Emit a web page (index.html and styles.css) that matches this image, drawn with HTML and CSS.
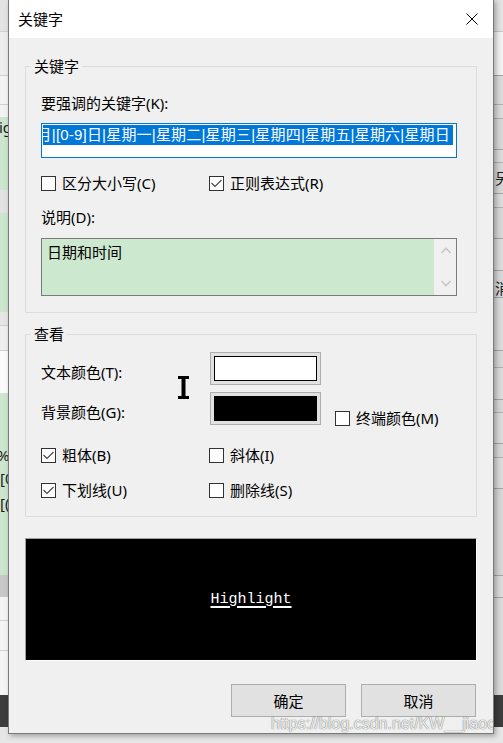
FILE: index.html
```html
<!DOCTYPE html>
<html lang="zh-CN">
<head>
<meta charset="utf-8">
<title>关键字</title>
<link rel="stylesheet" href="styles.css">
</head>
<body>
<div class="desk">
  <div class="bg-left">
    <span class="bl bl-ig">ig</span>
    <span class="bl bl-pct">%</span>
    <span class="bl bl-b0">[0</span>
    <span class="bl bl-b1">[(</span>
  </div>
  <div class="bg-mid"></div>
  <div class="bg-right">
    <span class="br br-1">另</span>
    <span class="br br-2">消</span>
  </div>
</div>

<div class="dialog">
  <div class="titlebar">
    <span class="title">关键字</span>
    <svg class="close" width="12" height="12" viewBox="0 0 12 12"><path d="M0.5 0.5L11.5 11.5M11.5 0.5L0.5 11.5" stroke="#000" stroke-width="1" fill="none"/></svg>
  </div>
  <div class="dlg-body">
    <fieldset class="grp grp-kw">
      <legend>关键字</legend>
      <div class="lbl">要强调的关键字(K):</div>
      <div class="kw-input">
        <div class="sel"><span class="sel-text">[0-9]月|[0-9]日|星期一|星期二|星期三|星期四|星期五|星期六|星期日</span></div>
      </div>
      <div class="chk-grid chk-row1">
        <label class="chk"><span class="box"></span><span>区分大小写(C)</span></label>
        <label class="chk"><span class="box"><svg width="13" height="13" viewBox="0 0 13 13"><polyline points="1.5,6 5,9.5 11.5,3" fill="none" stroke="#444" stroke-width="1.1"/></svg></span><span>正则表达式(R)</span></label>
      </div>
      <div class="lbl desc-label">说明(D):</div>
      <div class="desc">
        <div class="desc-text">日期和时间</div>
        <div class="scroll">
          <svg width="10" height="7" viewBox="0 0 10 7"><polyline points="0.5,6 5,1.2 9.5,6" fill="none" stroke="#c2c2c2" stroke-width="1.3"/></svg>
          <svg width="10" height="7" viewBox="0 0 10 7"><polyline points="0.5,1 5,5.8 9.5,1" fill="none" stroke="#c2c2c2" stroke-width="1.3"/></svg>
        </div>
      </div>
    </fieldset>

    <fieldset class="grp grp-view">
      <legend>查看</legend>
      <div class="view-grid">
        <div class="lbl vlabel">文本颜色(T):</div>
        <div class="cbtn"><div class="swatch swatch-white"></div></div>
        <div></div>
        <div class="lbl vlabel">背景颜色(G):</div>
        <div class="cbtn"><div class="swatch swatch-black"></div></div>
        <label class="chk term"><span class="box"></span><span>终端颜色(M)</span></label>
      </div>
      <div class="chk-grid chk-view">
        <label class="chk"><span class="box"><svg width="13" height="13" viewBox="0 0 13 13"><polyline points="1.5,6 5,9.5 11.5,3" fill="none" stroke="#444" stroke-width="1.1"/></svg></span><span>粗体(B)</span></label>
        <label class="chk"><span class="box"></span><span>斜体(I)</span></label>
        <label class="chk"><span class="box"><svg width="13" height="13" viewBox="0 0 13 13"><polyline points="1.5,6 5,9.5 11.5,3" fill="none" stroke="#444" stroke-width="1.1"/></svg></span><span>下划线(U)</span></label>
        <label class="chk"><span class="box"></span><span>删除线(S)</span></label>
      </div>
    </fieldset>

    <div class="preview"><span class="hl">Highlight</span></div>

    <div class="btns">
      <div class="btn">确定</div>
      <div class="btn">取消</div>
    </div>
  </div>

  <svg class="ibeam" width="11" height="23" viewBox="0 0 11 23"><rect x="0" y="0" width="11" height="3" fill="#000"/><rect x="3.5" y="0" width="4" height="23" fill="#000"/><rect x="0" y="20" width="11" height="3" fill="#000"/></svg>
  <div class="wm">https://blog.csdn.net/KW__jiaoq</div>
</div>
</body>
</html>
```

FILE: styles.css
```css
* { box-sizing: border-box; }
html, body { margin: 0; padding: 0; }
body {
  width: 503px;
  height: 743px;
  overflow: hidden;
  position: relative;
  background: #e6e6e6;
  font-family: "Noto Sans", "Noto Sans CJK SC", sans-serif;
  font-size: 15px;
  line-height: 20px;
  color: #000;
}

/* background window behind the dialog */
.desk {
  display: grid;
  grid-template-columns: 8px 1fr 10px;
  height: 743px;
}
.bg-left {
  display: flex;
  flex-direction: column;
  overflow: hidden;
  background: linear-gradient(to bottom,
    #e3e3e3 0 31px, #cfcfcf 31px 32px, #ededed 32px 75px, #cfcfcf 75px 76px,
    #f3f3f3 76px 104px, #d0d0d0 104px 105px, #f3f3f3 105px 117px,
    #cbe5ce 117px 190px, #e2e2e2 190px 213px, #cbe5ce 213px 312px,
    #e6e6e6 312px 325px, #cfcfcf 325px 326px, #eeeeee 326px 350px, #cfcfcf 350px 351px,
    #fbfbfb 351px 393px, #cbe5ce 393px 575px, #c8c8c8 575px 597px,
    #f4f4f4 597px 620px, #d0d0d0 620px 621px, #f4f4f4 621px 650px, #d0d0d0 650px 651px,
    #f4f4f4 651px 695px, #3d3d3d 695px 727px, #e6e6e6 727px 743px);
}
.bg-right {
  display: flex;
  flex-direction: column;
  overflow: hidden;
  padding-left: 2px;
  background: linear-gradient(to bottom,
    #e2e2e2 0 31px, #c4c4c4 31px 32px, #f2f2f2 32px 75px, #a3a3a3 75px 76px,
    #dadada 76px 104px, #b0b0b0 104px 105px, #dadada 105px 118px, #b0b0b0 118px 119px,
    #d6d6d6 119px 149px, #a3a3a3 149px 150px, #dadada 150px 162px, #b0b0b0 162px 163px,
    #d6d6d6 163px 193px, #a3a3a3 193px 194px, #dadada 194px 207px, #b0b0b0 207px 208px,
    #d6d6d6 208px 238px, #a3a3a3 238px 239px, #dadada 239px 270px, #a3a3a3 270px 271px,
    #d6d6d6 271px 297px, #a3a3a3 297px 298px, #dadada 298px 350px, #a3a3a3 350px 351px,
    #d6d6d6 351px 367px, #b0b0b0 367px 368px, #dadada 368px 399px, #a3a3a3 399px 400px,
    #d6d6d6 400px 412px, #b0b0b0 412px 413px, #dadada 413px 443px, #a3a3a3 443px 444px,
    #d6d6d6 444px 457px, #b0b0b0 457px 458px, #dadada 458px 488px, #a3a3a3 488px 489px,
    #d6d6d6 489px 575px, #a3a3a3 575px 576px, #dadada 576px 597px, #a3a3a3 597px 598px,
    #dadada 598px 695px, #3d3d3d 695px 727px, #e6e6e6 727px 743px);
}
.bl, .br {
  display: block;
  height: 20px;
  line-height: 20px;
  white-space: nowrap;
  color: #1a1a1a;
}
.bl-ig { margin-top: 117px; margin-left: -1px; }
.bl-pct { margin-top: 308px; margin-left: -3px; }
.bl-b0 { margin-top: 3px; }
.bl-b1 { margin-top: 5px; }
.br-1 { margin-top: 168px; }
.br-2 { margin-top: 90px; }

/* dialog window */
.dialog {
  position: absolute;
  left: 8px;
  top: -1px;
  width: 486px;
  border: 1px solid #7a7a7a;
  background: #f0f0f0;
  box-shadow: 2px 2px 5px rgba(0, 0, 0, 0.3);
  overflow: hidden;
}
.titlebar {
  height: 38px;
  background: #fff;
  display: flex;
  align-items: center;
  justify-content: space-between;
  padding: 0 15px 0 9px;
}
.close { display: block; }

.dlg-body {
  padding: 18px 16px 16px;
}
.grp {
  margin: 0;
  min-width: 0;
  border: 1px solid #dcdcdc;
  padding: 17px 19px 16px 15px;
}
.grp legend {
  padding: 0 3px;
  margin-left: -10px;
  line-height: 20px;
  height: 20px;
}
.grp-view {
  margin-top: 11px;
  padding-top: 8px;
}
.lbl { height: 20px; white-space: nowrap; }

.kw-input {
  margin-top: 10px;
  height: 35px;
  border: 1px solid #0078d7;
  background: #fff;
  padding: 1px 3px 0 1px;
  display: flex;
  align-items: flex-start;
}
.sel {
  flex: 1;
  min-width: 0;
  height: 20px;
  background: #0078d7;
  color: #fff;
  display: flex;
  justify-content: flex-end;
  overflow: hidden;
  padding-right: 3px;
  font-family: "Liberation Sans", "Noto Sans CJK SC", sans-serif;
}
.sel-text { flex-shrink: 0; white-space: nowrap; letter-spacing: 0.2px; }

.chk-grid {
  display: grid;
  grid-template-columns: 168px auto;
}
.chk-row1 { margin-top: 15px; }
.chk {
  display: flex;
  align-items: center;
  gap: 6px;
  height: 20px;
  white-space: nowrap;
}
.box {
  width: 15px;
  height: 15px;
  border: 1px solid #333;
  background: #fff;
  flex-shrink: 0;
}
.box svg { display: block; }

.desc-label { margin-top: 14px; }
.desc {
  margin-top: 11px;
  height: 58px;
  border: 1px solid #7a7a7a;
  display: flex;
}
.desc-text {
  flex: 1;
  background: #cce8cf;
  padding: 3px 5px;
}
.scroll {
  width: 22px;
  background: #f0f0f0;
  display: flex;
  flex-direction: column;
  justify-content: space-between;
  align-items: center;
  padding: 8px 0 8px 1px;
}
.scroll svg { display: block; }

.view-grid {
  display: grid;
  grid-template-columns: 155px 111px auto;
  grid-auto-rows: 33px;
  row-gap: 7px;
  column-gap: 14px;
}
.vlabel { align-self: start; margin-top: 10px; }
.cbtn {
  border: 1px solid #adadad;
  background: #e1e1e1;
  padding: 3px;
}
.swatch {
  height: 25px;
  border: 1px solid #000;
}
.swatch-white { background: #fff; }
.swatch-black { background: #000; }
.term { align-self: start; margin-top: 16px; }

.chk-view {
  margin-top: 20px;
  row-gap: 15px;
}

.preview {
  margin-top: 21px;
  height: 123px;
  background: #000;
  border: 1px solid;
  border-color: #a0a0a0 #fff #fff #a0a0a0;
  display: flex;
  align-items: center;
  justify-content: center;
}
.hl {
  font-family: "Liberation Mono", monospace;
  font-weight: normal;
  font-size: 15px;
  line-height: 20px;
  color: #fff;
  text-decoration: underline;
  text-decoration-thickness: 2px;
  text-underline-offset: 3px;
}

.btns {
  margin-top: 23px;
  display: flex;
  justify-content: flex-end;
  gap: 15px;
  padding-right: 1px;
}
.btn {
  width: 115px;
  height: 33px;
  border: 1px solid #adadad;
  background: #e1e1e1;
  display: flex;
  align-items: center;
  justify-content: center;
}

.ibeam {
  position: absolute;
  left: 169px;
  top: 376px;
  display: block;
}
.wm {
  position: absolute;
  left: 262px;
  top: 715px;
  font-family: "Liberation Sans", sans-serif;
  font-size: 16px;
  line-height: 18px;
  white-space: nowrap;
  color: rgba(255, 255, 255, 0.9);
  text-shadow: 0 0 1px rgba(0, 0, 0, 0.55), 0 0 1px rgba(0, 0, 0, 0.3);
}
```
